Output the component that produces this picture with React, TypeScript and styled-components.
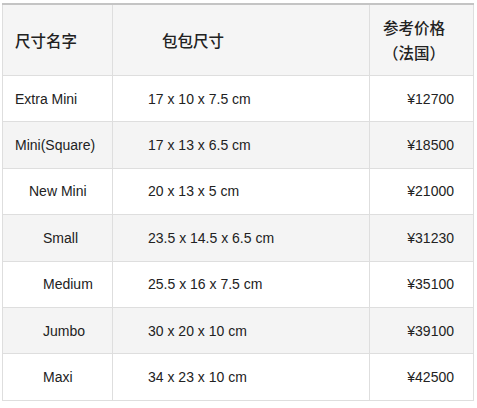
import styled, { createGlobalStyle } from 'styled-components'

const GlobalStyle = createGlobalStyle`
  html, body {
    margin: 0;
    padding: 0;
    background: #ffffff;
  }
  body {
    font-family: 'Liberation Sans', Arial, 'Noto Sans CJK SC', sans-serif;
    color: #222;
  }
`

const Page = styled.div`
  padding: 3px 0 0 2px;
`

const SizeTable = styled.table`
  width: 471px;
  border-collapse: collapse;
  table-layout: fixed;
  border-top: 2px solid #c4c4c4;
  font-size: 14px;
`

const HeadCell = styled.th<{ $pad: number; $align?: 'left' | 'right' }>`
  height: 70px;
  padding: 0 ${({ $align }) => ($align === 'right' ? '28px' : '0')} 0 ${({ $pad }) => $pad}px;
  text-align: ${({ $align }) => $align ?? 'left'};
  vertical-align: middle;
  background: #f5f5f5;
  border: 1px solid #dedede;
  border-top: none;
  font-family: 'Noto Sans CJK SC', 'Liberation Sans', sans-serif;
  font-size: 15.5px;
  font-weight: 500;
  line-height: 25px;
  color: #222;
`

const Row = styled.tr<{ $shaded: boolean }>`
  background: ${({ $shaded }) => ($shaded ? '#f4f4f4' : '#ffffff')};
`

const Cell = styled.td<{ $pad?: number; $align?: 'left' | 'right' }>`
  height: 45.4px;
  padding: 0 ${({ $align }) => ($align === 'right' ? '19px' : '0')} 0 ${({ $pad }) => $pad ?? 0}px;
  text-align: ${({ $align }) => $align ?? 'left'};
  vertical-align: middle;
  border: 1px solid #dedede;
  white-space: nowrap;
  line-height: 18px;
`

const bags = [
  { name: 'Extra Mini', indent: 12, size: '17 x 10 x 7.5 cm', price: '¥12700' },
  { name: 'Mini(Square)', indent: 12, size: '17 x 13 x 6.5 cm', price: '¥18500' },
  { name: 'New Mini', indent: 26, size: '20 x 13 x 5 cm', price: '¥21000' },
  { name: 'Small', indent: 40, size: '23.5 x 14.5 x 6.5 cm', price: '¥31230' },
  { name: 'Medium', indent: 40, size: '25.5 x 16 x 7.5 cm', price: '¥35100' },
  { name: 'Jumbo', indent: 40, size: '30 x 20 x 10 cm', price: '¥39100' },
  { name: 'Maxi', indent: 40, size: '34 x 23 x 10 cm', price: '¥42500' },
]

export default function App() {
  return (
    <Page>
      <GlobalStyle />
      <SizeTable>
        <colgroup>
          <col style={{ width: 110 }} />
          <col style={{ width: 257 }} />
          <col style={{ width: 104 }} />
        </colgroup>
        <thead>
          <tr>
            <HeadCell $pad={12}>尺寸名字</HeadCell>
            <HeadCell $pad={49}>包包尺寸</HeadCell>
            <HeadCell $pad={0} $align="right">
              参考价格
              <br />
              （法国）
            </HeadCell>
          </tr>
        </thead>
        <tbody>
          {bags.map((bag, index) => (
            <Row key={bag.name} $shaded={index % 2 === 1}>
              <Cell $pad={bag.indent}>{bag.name}</Cell>
              <Cell $pad={35}>{bag.size}</Cell>
              <Cell $align="right">{bag.price}</Cell>
            </Row>
          ))}
        </tbody>
      </SizeTable>
    </Page>
  )
}
